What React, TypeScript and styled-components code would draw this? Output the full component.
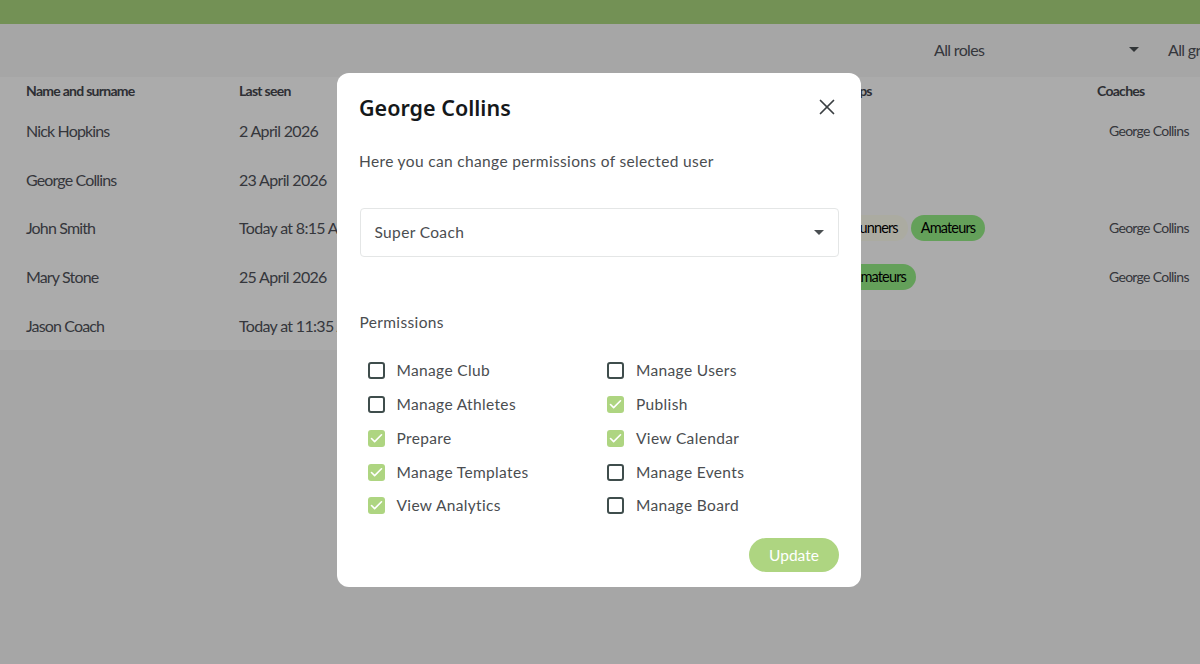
import React from "react";
import styled, { createGlobalStyle } from "styled-components";
import { Check, X } from "lucide-react";

interface UserRow {
	name: string;
	seen: string;
	groups: { label: string; kind: "plain" | "green" }[];
	coach: string;
}

const users: UserRow[] = [
	{ name: "Nick Hopkins", seen: "2 April 2026", groups: [], coach: "George Collins" },
	{ name: "George Collins", seen: "23 April 2026", groups: [], coach: "" },
	{
		name: "John Smith",
		seen: "Today at 8:15 AM",
		groups: [
			{ label: "Runners", kind: "plain" },
			{ label: "Amateurs", kind: "green" },
		],
		coach: "George Collins",
	},
	{
		name: "Mary Stone",
		seen: "25 April 2026",
		groups: [{ label: "Amateurs", kind: "green" }],
		coach: "George Collins",
	},
	{ name: "Jason Coach", seen: "Today at 11:35 AM", groups: [], coach: "" },
];

const permissions = [
	{ label: "Manage Club", on: false },
	{ label: "Manage Users", on: false },
	{ label: "Manage Athletes", on: false },
	{ label: "Publish", on: true },
	{ label: "Prepare", on: true },
	{ label: "View Calendar", on: true },
	{ label: "Manage Templates", on: true },
	{ label: "Manage Events", on: false },
	{ label: "View Analytics", on: true },
	{ label: "Manage Board", on: false },
];

export default function App() {
	return (
		<Page>
			<GlobalStyle />
			<TopBar />
			<Filters>
				<FilterSelect>
					All roles
					<Caret />
				</FilterSelect>
				<FilterSelect>All groups</FilterSelect>
			</Filters>
			<Table>
				<HeadRow>
					<span>Name and surname</span>
					<span>Last seen</span>
					<span>Groups</span>
					<span>Coaches</span>
				</HeadRow>
				{users.map(user => (
					<Row key={user.name}>
						<span>{user.name}</span>
						<Seen>{user.seen}</Seen>
						<Pills>
							{user.groups.map(group => (
								<Pill key={group.label} $kind={group.kind}>
									{group.label}
								</Pill>
							))}
						</Pills>
						<Coach>{user.coach}</Coach>
					</Row>
				))}
			</Table>
			<Overlay>
				<Modal>
					<ModalHead>
						<Title>George Collins</Title>
						<CloseButton>
							<X size={26} strokeWidth={1.6} />
						</CloseButton>
					</ModalHead>
					<Subtitle>Here you can change permissions of selected user</Subtitle>
					<RoleSelect>
						<span>Super Coach</span>
						<Caret />
					</RoleSelect>
					<SectionLabel>Permissions</SectionLabel>
					<PermissionGrid>
						{permissions.map(item => (
							<Permission key={item.label}>
								<Box $on={item.on}>
									{item.on && <Check size={15} strokeWidth={2.6} color="#fff" />}
								</Box>
								<PermissionText>{item.label}</PermissionText>
							</Permission>
						))}
					</PermissionGrid>
					<Footer>
						<UpdateButton>Update</UpdateButton>
					</Footer>
				</Modal>
			</Overlay>
		</Page>
	);
}

const GlobalStyle = createGlobalStyle`
	html, body {
		margin: 0;
		height: 100%;
		overflow: hidden;
	}
	* {
		box-sizing: border-box;
	}
`;

const Page = styled.div`
	position: relative;
	width: 1200px;
	height: 664px;
	overflow: hidden;
	background: #f8f8f8;
	font-family: Lato, sans-serif;
	color: #50525a;
`;

const TopBar = styled.div`
	height: 24px;
	background: #acd97f;
`;

const Filters = styled.div`
	display: flex;
	height: 53px;
	padding: 0 0 2px 934px;
	gap: 29px;
	align-items: center;
	white-space: nowrap;
`;

const FilterSelect = styled.div`
	flex: none;
	width: 205px;
	display: flex;
	align-items: center;
	justify-content: space-between;
	font-size: 16px;
	letter-spacing: -0.65px;
`;

const Caret = styled.i`
	width: 0;
	height: 0;
	border-left: 5px solid transparent;
	border-right: 5px solid transparent;
	border-top: 5px solid #4a4f52;
`;

const Table = styled.div`
	background: #fff;
	height: 273px;
`;

const columns = `
	display: grid;
	grid-template-columns: 213px 592px 266px 1fr;
	padding-left: 26px;
	align-items: center;
	white-space: nowrap;
`;

const HeadRow = styled.div`
	${columns}
	height: 29px;
	padding-bottom: 2px;
	font-size: 14px;
	font-weight: 700;
	letter-spacing: -0.72px;
	color: #45474e;
`;

const Row = styled.div`
	${columns}
	height: 48.75px;
	font-size: 16px;
	letter-spacing: -0.85px;
`;

const Seen = styled.span`
	letter-spacing: -0.68px;
`;

const Pills = styled.div`
	display: flex;
	gap: 3px;
	padding-left: 10.5px;
`;

const Pill = styled.span<{ $kind: "plain" | "green" }>`
	height: 26px;
	padding: 0 10px;
	border-radius: 13px;
	display: flex;
	align-items: center;
	font-size: 14.5px;
	color: #000;
	background: ${({ $kind }) => ($kind === "green" ? "#96ef87" : "#fffff0")};
`;

const Coach = styled.span`
	padding-left: 12px;
	font-size: 14px;
	letter-spacing: -0.7px;
`;

const Overlay = styled.div`
	position: absolute;
	inset: 0;
	background: rgba(0, 0, 0, 0.33);
	padding: 73px 0 0 337px;
`;

const Modal = styled.div`
	width: 524px;
	height: 514px;
	background: #fff;
	border-radius: 12px;
	padding: 0 22px 0 22.5px;
	font-family: Lato, sans-serif;
	color: #4a4d50;
`;

const ModalHead = styled.div`
	height: 69px;
	display: flex;
	align-items: center;
	justify-content: space-between;
`;

const Title = styled.h2`
	margin: 0 0 0 -0.5px;
	font-family: "Noto Sans", sans-serif;
	font-size: 21.5px;
	font-weight: 600;
	color: #15181a;
`;

const CloseButton = styled.div`
	display: flex;
	margin-right: -1px;
	margin-top: -2px;
	color: #3a3f42;
`;

const Subtitle = styled.p`
	margin: 6px 0 0 -0.5px;
	font-size: 15.5px;
	line-height: 26px;
	letter-spacing: 0.35px;
`;

const RoleSelect = styled.div`
	margin-top: 34px;
	height: 49px;
	padding: 0 14px 1px;
	border: 1px solid #e4e6e6;
	border-radius: 4px;
	display: flex;
	align-items: center;
	justify-content: space-between;
	font-size: 15.5px;
	letter-spacing: 0.35px;
`;

const SectionLabel = styled.div`
	margin-top: 52px;
	font-size: 15.5px;
	line-height: 26px;
	letter-spacing: 0.35px;
`;

const PermissionGrid = styled.div`
	margin-top: 19px;
	padding-left: 8px;
	display: grid;
	grid-template-columns: 239.5px 1fr;
	grid-auto-rows: 33.75px;
`;

const Permission = styled.label`
	display: flex;
	align-items: center;
	gap: 12px;
	font-size: 15.5px;
	letter-spacing: 0.35px;
`;

const PermissionText = styled.span`
	padding-bottom: 1px;
`;

const Box = styled.span<{ $on: boolean }>`
	width: 17px;
	height: 17px;
	border-radius: 3px;
	display: flex;
	align-items: center;
	justify-content: center;
	border: ${({ $on }) => ($on ? "none" : "2px solid #3f4d4c")};
	background: ${({ $on }) => ($on ? "#aed581" : "#fff")};
`;

const Footer = styled.div`
	margin-top: 15px;
	display: flex;
	justify-content: flex-end;
`;

const UpdateButton = styled.div`
	width: 90px;
	height: 34px;
	border-radius: 17px;
	background: #aed581;
	color: #fff;
	font-size: 15.5px;
	display: flex;
	align-items: center;
	justify-content: center;
`;
